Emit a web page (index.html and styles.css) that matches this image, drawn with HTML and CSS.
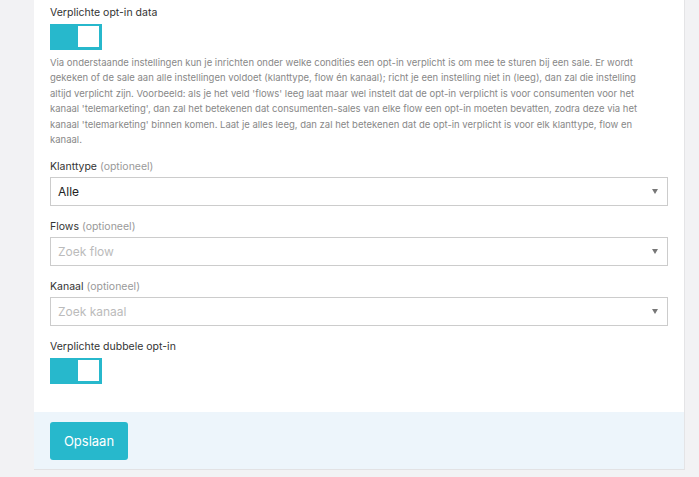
FILE: index.html
```html
<!DOCTYPE html>
<html lang="nl">
<head>
<meta charset="utf-8">
<title>Opt-in instellingen</title>
<link rel="stylesheet" href="styles.css">
</head>
<body>
<div class="card">
  <div class="card-body">
    <div class="label">Verplichte opt-in data</div>
    <div class="toggle"><span class="knob"></span></div>
    <p class="help">Via onderstaande instellingen kun je inrichten onder welke condities een opt-in verplicht is om mee te sturen bij een sale. Er wordt gekeken of de sale aan alle instellingen voldoet (klanttype, flow én kanaal); richt je een instelling niet in (leeg), dan zal die instelling altijd verplicht zijn. Voorbeeld: als je het veld 'flows' leeg laat maar wel instelt dat de opt-in verplicht is voor consumenten voor het kanaal 'telemarketing', dan zal het betekenen dat consumenten-sales van elke flow een opt-in moeten bevatten, zodra deze via het kanaal 'telemarketing' binnen komen. Laat je alles leeg, dan zal het betekenen dat de opt-in verplicht is voor elk klanttype, flow en kanaal.</p>

    <div class="group">
      <div class="label">Klanttype <span class="opt">(optioneel)</span></div>
      <div class="select"><span class="value">Alle</span><span class="arrow"></span></div>
    </div>
    <div class="group">
      <div class="label">Flows <span class="opt">(optioneel)</span></div>
      <div class="select"><span class="placeholder">Zoek flow</span><span class="arrow"></span></div>
    </div>
    <div class="group">
      <div class="label">Kanaal <span class="opt">(optioneel)</span></div>
      <div class="select"><span class="placeholder">Zoek kanaal</span><span class="arrow"></span></div>
    </div>

    <div class="label">Verplichte dubbele opt-in</div>
    <div class="toggle"><span class="knob"></span></div>
  </div>
  <div class="card-footer">
    <button class="btn">Opslaan</button>
  </div>
</div>
</body>
</html>
```
FILE: styles.css
```css
html, body {
  margin: 0;
  padding: 0;
  background: #f2f2f4;
  font-family: Inter, "Noto Sans", sans-serif;
}

.card {
  margin-left: 34px;
  width: 650px;
  background: #fff;
  border-right: 1px solid #e4e4e6;
  border-bottom: 1px solid #e2e2e4;
}

.card-body {
  padding: 5px 16px 28px;
}

.label {
  font-size: 10.5px;
  line-height: 16px;
  color: #333;
}

.opt {
  color: #999;
}

.toggle {
  margin-top: 3px;
  width: 52px;
  height: 26px;
  box-sizing: border-box;
  background: #27b8cc;
  display: flex;
  justify-content: flex-end;
  padding: 2px 3px 3px 2px;
}

.knob {
  width: 21px;
  height: 21px;
  background: #fff;
}

.help {
  margin: 5px 12px 12px 0;
  font-size: 9.5px;
  line-height: 15.4px;
  color: #888;
}

.group {
  margin-bottom: 13px;
}

.group .label {
  margin-bottom: 2px;
}

.select {
  height: 29px;
  box-sizing: border-box;
  border: 1px solid #ccc;
  display: flex;
  align-items: center;
  justify-content: space-between;
  padding: 0 7px 0 7px;
  font-size: 12px;
}

.value {
  color: #222;
}

.placeholder {
  color: #bbb;
}

.arrow {
  width: 0;
  height: 0;
  border-left: 3px solid transparent;
  border-right: 3px solid transparent;
  border-top: 5px solid #777;
  margin-right: 2px;
}

.card-footer {
  background: #edf5fb;
  padding: 10px 16px 9px;
}

.btn {
  display: block;
  width: 78px;
  height: 38px;
  border: 0;
  border-radius: 3px;
  background: #27b8cc;
  color: #fff;
  font-family: Inter, "Noto Sans", sans-serif;
  font-size: 13px;
  padding: 0;
}
```
